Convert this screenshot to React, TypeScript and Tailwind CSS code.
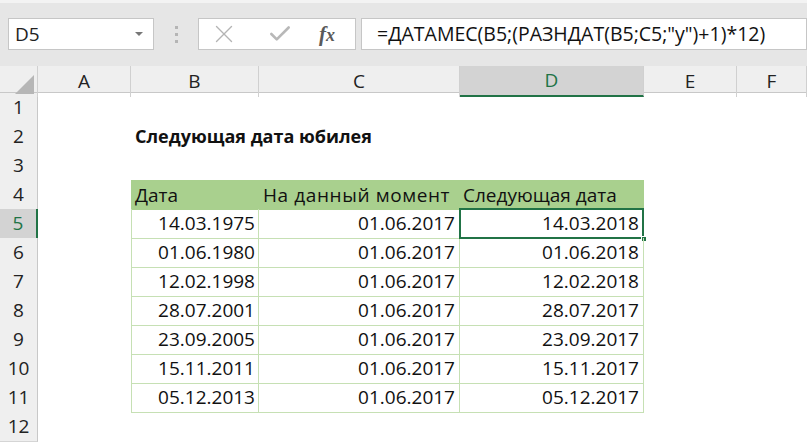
import React from 'react';
import { X, Check } from 'lucide-react';

const rows = [
  ['14.03.1975', '01.06.2017', '14.03.2018'],
  ['01.06.1980', '01.06.2017', '01.06.2018'],
  ['12.02.1998', '01.06.2017', '12.02.2018'],
  ['28.07.2001', '01.06.2017', '28.07.2017'],
  ['23.09.2005', '01.06.2017', '23.09.2017'],
  ['15.11.2011', '01.06.2017', '15.11.2017'],
  ['05.12.2013', '01.06.2017', '05.12.2017'],
];

const cols = ['A', 'B', 'C', 'D', 'E', 'F'];
const gridCols = 'grid grid-cols-[38px_93px_128px_201px_184px_93px_1fr]';

function RowHead({ n, active }: { n: number; active?: boolean }) {
  return (
    <div
      className={`flex items-center justify-center border-b border-[#d5d5d5] text-[19px] ${
        active
          ? 'bg-[#d3d3d3] text-[#217346] border-r-2 border-r-[#217346]'
          : 'bg-[#efefef] text-[#222] border-r border-r-[#c8c8c8]'
      }`}
    >
      {n}
    </div>
  );
}

export default function App() {
  return (
    <div className="w-[807px] h-[443px] overflow-hidden bg-white font-['Open_Sans',sans-serif] text-[#111]">
      {/* formula bar */}
      <div className="h-[66px] bg-[#e6e6e6] border-t-[3px] border-t-[#f3f3f3] flex items-start pt-[15px] pl-[8px]">
        <div className="w-[146px] h-[32px] bg-white border border-[#c6c6c6] flex items-center justify-between pl-[6px] pr-[10px]">
          <span className="text-[19px] text-[#222]">D5</span>
          <span className="w-0 h-0 border-l-[4px] border-r-[4px] border-t-[4px] border-l-transparent border-r-transparent border-t-[#777]" />
        </div>
        <div className="w-[44px] h-[32px] flex flex-col items-center justify-center gap-[4px]">
          <span className="w-[3px] h-[3px] bg-[#b5b5b5]" />
          <span className="w-[3px] h-[3px] bg-[#b5b5b5]" />
          <span className="w-[3px] h-[3px] bg-[#b5b5b5]" />
        </div>
        <div className="w-[158px] h-[32px] bg-white border border-[#c6c6c6] flex items-center pl-[10px]">
          <X className="w-[30px] h-[30px] text-[#b4b4b4]" strokeWidth={1.1} />
          <Check className="w-[26px] h-[26px] text-[#b8b8b8] ml-[28px]" strokeWidth={2.4} />
          <span className="ml-[26px] font-['Liberation_Serif',serif] italic font-bold text-[21px] text-[#5a5a5a] leading-none">
            f<span className="text-[18px]">x</span>
          </span>
        </div>
        <div className="flex-1 h-[32px] bg-white border border-[#c6c6c6] ml-[5px] flex items-center pl-[15px] text-[19.5px] text-[#111] whitespace-nowrap">
          =ДАТАМЕС(B5;(РАЗНДАТ(B5;C5;"y")+1)*12)
        </div>
      </div>

      {/* column headers */}
      <div className={`${gridCols} h-[27px] bg-[#efefef] border-b border-[#c8c8c8]`}>
        <div className="relative border-r border-[#d0d0d0]">
          <span className="absolute right-[3px] bottom-[3px] w-0 h-0 border-l-[19px] border-t-[19px] border-l-transparent border-t-transparent border-b-0 border-r-0 [border-bottom:19px_solid_#b6b6b6]" />
        </div>
        {cols.map(c => (
          <div
            key={c}
            className={`flex items-center justify-center text-[19px] border-r border-[#d0d0d0] ${
              c === 'D' ? 'bg-[#d3d3d3] text-[#217346] border-b-2 border-b-[#217346]' : 'text-[#222]'
            }`}
          >
            {c}
          </div>
        ))}
      </div>

      {/* rows */}
      {Array.from({ length: 12 }, (_, i) => i + 1).map(n => {
        const isTable = n >= 4 && n <= 11;
        const data = n >= 5 && n <= 11 ? rows[n - 5] : null;
        return (
          <div key={n} className={`${gridCols} h-[29px]`}>
            <RowHead n={n} active={n === 5} />
            <div />
            {n === 2 && (
              <div className="col-span-5 flex items-center pl-[4px] font-bold text-[18px] whitespace-nowrap">
                Следующая дата юбилея
              </div>
            )}
            {n === 4 && (
              <>
                <div className="bg-[#a9d08e] flex items-center pl-[3px] text-[19px] border-l border-[#a9d08e]">Дата</div>
                <div className="bg-[#a9d08e] flex items-center pl-[4px] text-[19px] tracking-[0.6px] whitespace-nowrap">
                  На данный момент
                </div>
                <div className="bg-[#a9d08e] flex items-center pl-[3px] text-[19px] whitespace-nowrap">Следующая дата</div>
              </>
            )}
            {data && (
              <>
                <div className="flex items-center justify-end pr-[3px] text-[19px] border-l border-r border-b border-[#c6e0b4]">
                  {data[0]}
                </div>
                <div className="flex items-center justify-end pr-[4px] text-[19px] border-r border-b border-[#c6e0b4]">
                  {data[1]}
                </div>
                <div className="relative flex items-center justify-end pr-[4px] text-[19px] border-r border-b border-[#c6e0b4]">
                  {data[2]}
                  {n === 5 && (
                    <>
                      <span className="absolute -left-[1px] -top-[1px] -right-[1px] -bottom-[1px] border-2 border-[#217346]" />
                      <span className="absolute -right-[4px] -bottom-[4px] w-[6px] h-[6px] bg-[#217346] border border-white" />
                    </>
                  )}
                </div>
              </>
            )}
            {!isTable && n !== 2 && <div />}
          </div>
        );
      })}
    </div>
  );
}
